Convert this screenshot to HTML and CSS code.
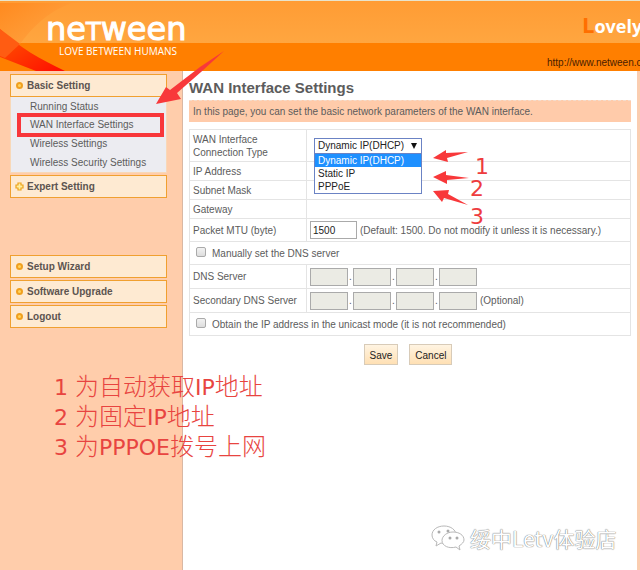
FILE: index.html
```html
<!DOCTYPE html>
<html lang="en">
<head>
<meta charset="utf-8">
<title>WAN Interface Settings</title>
<link rel="stylesheet" href="styles.css">
</head>
<body>
<header class="banner">
  <svg class="banner-art" width="80" height="71" viewBox="0 0 80 71" aria-hidden="true">
    <defs><linearGradient id="wave" x1="0" y1="0" x2="1" y2="1"><stop offset="0" stop-color="#ff8418"/><stop offset="1" stop-color="#ffad50"/></linearGradient>
    <linearGradient id="flame" x1="0" y1="0" x2="1" y2="1"><stop offset="0" stop-color="#ff5a00"/><stop offset="1" stop-color="#ff0c00"/></linearGradient></defs>
    <path d="M0 2H72C50 10 36 22 20 43L5 57L0 50Z" fill="url(#wave)" opacity=".75"/>
    <path d="M0 28C20 47 40 58 65 70H36L0 56Z" fill="url(#flame)"/>
    <path d="M0 28L20 43L5 57L0 55Z" fill="#ff5c12"/>
  </svg>
  <div class="brand">
    <div class="logo">ne<span class="logo-t">T</span>ween</div>
    <div class="tagline">LOVE BETWEEN HUMANS</div>
  </div>
  <div class="promo">
    <div class="slogan"><span class="slogan-cap">L</span>ovely</div>
    <a class="site" href="#">http://www.netween.c</a>
  </div>
</header>
<div class="layout">
  <nav class="sidebar">
    <a class="menu-head" href="#"><span class="dot"></span>Basic Setting</a>
    <ul class="submenu">
      <li><a href="#">Running Status</a></li>
      <li class="current"><a href="#">WAN Interface Settings</a></li>
      <li><a href="#">Wireless Settings</a></li>
      <li><a href="#">Wireless Security Settings</a></li>
    </ul>
    <a class="menu-head" href="#"><svg width="9" height="9" viewBox="0 0 9 9" aria-hidden="true"><path d="M3 1H6V3H8V6H6V8H3V6H1V3H3Z" fill="#fff0a0" stroke="#eda21c" stroke-width="1.2"/></svg>Expert Setting</a>
    <div class="tools">
      <a class="menu-head" href="#"><span class="dot"></span>Setup Wizard</a>
      <a class="menu-head" href="#"><span class="dot"></span>Software Upgrade</a>
      <a class="menu-head" href="#"><span class="dot"></span>Logout</a>
    </div>
  </nav>
  <main class="content">
    <h1>WAN Interface Settings</h1>
    <p class="notice">In this page, you can set the basic network parameters of the WAN interface.</p>
    <form>
      <table class="settings">
        <tr class="type-row"><th><label for="type">WAN Interface<br>Connection Type</label></th>
          <td><div class="picker">
            <select id="type"><option>Dynamic IP(DHCP)</option><option>Static IP</option><option>PPPoE</option></select>
            <span class="caret"></span>
            <ul class="options"><li class="chosen">Dynamic IP(DHCP)</li><li>Static IP</li><li>PPPoE</li></ul>
          </div></td></tr>
        <tr><th>IP Address</th><td></td></tr>
        <tr><th>Subnet Mask</th><td></td></tr>
        <tr><th>Gateway</th><td></td></tr>
        <tr class="mid"><th><label for="mtu">Packet MTU (byte)</label></th><td><div class="fields"><input class="mtu" id="mtu" value="1500"><span class="hint">(Default: 1500. Do not modify it unless it is necessary.)</span></div></td></tr>
        <tr class="mid"><td colspan="2"><label class="check"><input type="checkbox">Manually set the DNS server</label></td></tr>
        <tr class="tall"><th>DNS Server</th><td><div class="fields"><input class="octet" disabled aria-label="DNS 1"><span class="sep">.</span><input class="octet" disabled aria-label="DNS 2"><span class="sep">.</span><input class="octet" disabled aria-label="DNS 3"><span class="sep">.</span><input class="octet" disabled aria-label="DNS 4"></div></td></tr>
        <tr class="tall"><th>Secondary DNS Server</th><td><div class="fields"><input class="octet" disabled aria-label="Secondary DNS 1"><span class="sep">.</span><input class="octet" disabled aria-label="Secondary DNS 2"><span class="sep">.</span><input class="octet" disabled aria-label="Secondary DNS 3"><span class="sep">.</span><input class="octet" disabled aria-label="Secondary DNS 4"><span class="hint">(Optional)</span></div></td></tr>
        <tr class="mid"><td colspan="2"><label class="check"><input type="checkbox">Obtain the IP address in the unicast mode (it is not recommended)</label></td></tr>
      </table>
      <div class="actions"><button type="button">Save</button><button type="button">Cancel</button></div>
    </form>
  </main>
</div>
<div class="notes" lang="zh">
  <div><span class="latin">1 </span>为自动获取<span class="latin">IP</span>地址</div>
  <div><span class="latin">2 </span>为固定<span class="latin">IP</span>地址</div>
  <div><span class="latin">3 </span>为<span class="latin">PPPOE</span>拨号上网</div>
</div>
<svg class="arrows" width="640" height="250" viewBox="0 0 640 250" aria-hidden="true">
  <g fill="#f8383a">
    <path d="M156 104L166 87L170 90L200 67L224 51L201 72L177 93L181 99Z"/>
    <path d="M433 158L446 150V153L468 152L447 158L448 162Z"/>
    <path d="M433 177L446 171V175L469 178L447 180V184Z"/>
    <path d="M433 191L449 190L448 194L468 205L444 198L442 202Z"/>
  </g>
</svg>
<span class="mark mark-1">1</span><span class="mark mark-2">2</span><span class="mark mark-3">3</span>
<div class="watermark" lang="zh">
  <svg width="34" height="28" viewBox="0 0 34 28" fill="#fff" stroke="#b8b8b8" aria-hidden="true">
    <path d="M13 2C6 2 1 6 1 11C1 14 3 17 6 18L5 22L10 19C16 21 25 18 25 11C25 6 20 2 13 2Z"/>
    <path d="M22 8C16 8 11 12 11 16.500C11 22 18 25 25 23L29 26L28 22C31 20 33 18 33 16C33 11 28 8 22 8Z"/>
    <g fill="#aaa" stroke="none"><circle cx="8" cy="8" r="1.500"/><circle cx="17" cy="7" r="1.500"/><circle cx="19" cy="14" r="1.500"/><circle cx="26" cy="14" r="1.500"/></g>
  </svg>
  <span>绥中Letv体验店</span>
</div>
</body>
</html>
```
FILE: styles.css
```css
* { box-sizing: border-box; }
body {
  margin: 0;
  min-height: 100vh;
  display: flex;
  flex-direction: column;
  position: relative;
  overflow: hidden;
  background: #fff;
  color: #5c5c5c;
  font: 10px/13px "Liberation Sans", Arial, sans-serif;
}
a { color: inherit; text-decoration: none; }
ul { list-style: none; margin: 0; padding: 0; }

.banner {
  height: 71px;
  position: relative;
  display: flex;
  justify-content: space-between;
  overflow: hidden;
  border-top: 1px solid #e8e4cc;
  background: linear-gradient(#ff9c34 0, #ffa640 42px, #ff7f00 42px);
}
.banner-art { position: absolute; left: 0; top: 0; }
.brand { position: relative; padding: 15px 0 0 46px; color: #fff; }
.logo {
  font: 32px/26px "DejaVu Sans", sans-serif;
  -webkit-text-stroke: 1px #fff;
}
.logo-t { font-size: 24px; }
.tagline { padding-left: 13px; font: 10px/12px "Open Sans", sans-serif; }
.promo { width: 93px; white-space: nowrap; }
.slogan {
  padding: 9px 0 0 35px;
  color: #fff;
  font: bold 18px/28px "Open Sans", sans-serif;
}
.slogan-cap { color: #ff6f00; font-size: 22px; }
.site { display: block; padding-top: 16px; color: #4a2000; }

.layout { flex: 1; display: flex; border-right: 3px solid #fbcdb0; }
.sidebar {
  width: 183px;
  flex: none;
  padding: 3px 15px 0 10px;
  background: #ffcdab;
  border-right: 1px solid #d9b8a4;
}
.menu-head {
  height: 23px;
  display: flex;
  align-items: center;
  gap: 3px;
  padding-left: 4px;
  border: 1px solid #f0a030;
  background: #feead2;
  color: #5c5450;
  font-weight: bold;
}
.dot {
  width: 7px;
  height: 7px;
  margin: 0 1px;
  border: 2px solid #f0a020;
  border-radius: 50%;
  background: #ffd45c;
}
.submenu {
  margin-bottom: 2px;
  background: #ececf1;
  border: 1px solid #f8d8b8;
  border-top: 0;
}
.submenu li { height: 19px; padding-left: 19px; line-height: 19px; }
.submenu .current {
  height: 24px;
  margin: -3px 2px -3px 6px;
  padding-left: 9px;
  line-height: 16px;
  border: 4px solid #f8363a;
}
.tools { display: grid; gap: 2px; margin-top: 57px; }

.content { flex: 1; padding: 7px 6px 0 6px; }
h1 { margin: 0; font-size: 15px; line-height: 20px; }
.notice {
  margin: 2px 0 7px;
  padding: 4px;
  background: #ffcbaa;
  border-top: 1px dashed #f4dccc;
}
.settings { width: 100%; border-collapse: collapse; }
.settings th, .settings td {
  height: 19px;
  padding: 0 3px;
  border: 1px solid #e4e4e4;
  text-align: left;
  font-weight: normal;
}
.settings th { width: 117px; }
.settings .type-row th { height: 32px; }
.settings .mid td, .settings .mid th { height: 23px; }
.settings .tall td, .settings .tall th { height: 24px; }
.picker { position: relative; width: 108px; margin-left: 4px; color: #222; }
select {
  display: block;
  width: 100%;
  height: 16px;
  padding: 0 3px;
  appearance: none;
  border: 1px solid #6b83c4;
  border-radius: 0;
  background: #fff;
  color: #222;
  font: inherit;
}
.caret {
  position: absolute;
  right: 5px;
  top: 5px;
  border: 3px solid transparent;
  border-top: 6px solid #111;
  border-bottom: 0;
}
.options {
  position: absolute;
  z-index: 1;
  top: 15px;
  left: 0;
  right: 0;
  background: #fff;
  border: 1px solid #6b83c4;
}
.options li { padding-left: 3px; }
.options .chosen { background: #1e90ff; color: #fff; }
.fields { display: flex; align-items: center; }
.mtu, .octet { height: 18px; border: 1px solid #aaa; font: inherit; }
.mtu { width: 47px; padding: 0 2px; color: #222; }
.octet { width: 38px; background: #ebebe4; }
.sep { width: 5px; text-align: center; }
.hint { padding-left: 3px; white-space: nowrap; }
.check { display: flex; align-items: center; gap: 5px; padding-left: 3px; }
.check input {
  width: 10px;
  height: 10px;
  margin: 0 1px 3px 0;
  appearance: none;
  border: 1px solid #aaa;
  border-radius: 2px;
  background: linear-gradient(#f2f2f2, #ddd);
}
.actions { display: flex; justify-content: center; gap: 11px; padding: 8px 4px 0 0; }
button {
  height: 21px;
  padding: 2px 5px 0;
  border: 1px solid #d8cbb8;
  background: linear-gradient(#fff4e2, #ffe0b4);
  color: #222;
  font: inherit;
}

.notes {
  position: absolute;
  left: 54px;
  top: 370px;
  color: #e84440;
  font: 300 24px/30px "Noto Sans CJK SC", sans-serif;
}
.notes div { height: 30px; }
.latin { font: 22px/22px "DejaVu Sans", sans-serif; }
.arrows { position: absolute; left: 0; top: 0; z-index: 2; pointer-events: none; }
.mark { position: absolute; z-index: 3; color: #ee3c3e; font: 22px/22px "DejaVu Sans", sans-serif; }
.mark-1 { left: 475px; top: 156px; }
.mark-2 { left: 470px; top: 178px; }
.mark-3 { left: 470px; top: 206px; }
.watermark {
  position: absolute;
  left: 431px;
  top: 524px;
  display: flex;
  align-items: center;
  gap: 5px;
  color: #fff;
  font: 21px/28px "Noto Sans CJK SC", sans-serif;
  text-shadow: 0 0 1px #777, 0 0 1px #777;
}
```
